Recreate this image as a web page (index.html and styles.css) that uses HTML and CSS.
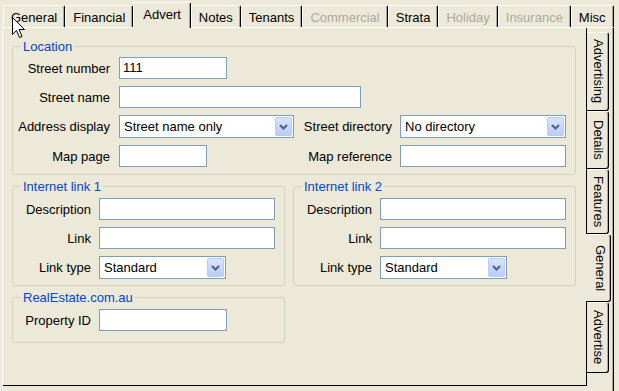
FILE: index.html
```html
<!DOCTYPE html>
<html lang="en">
<head>
  <meta charset="UTF-8">
  <title>Property - Advert</title>
  <link rel="stylesheet" href="styles.css">
</head>
<body>
  <div class="window">
    <div class="tabs">
      <div class="tab">General</div>
      <div class="tab">Financial</div>
      <div class="tab active">Advert</div>
      <div class="tab">Notes</div>
      <div class="tab">Tenants</div>
      <div class="tab disabled">Commercial</div>
      <div class="tab">Strata</div>
      <div class="tab disabled">Holiday</div>
      <div class="tab disabled">Insurance</div>
      <div class="tab">Misc</div>
    </div>

    <div class="page">
      <div class="inner">
        <fieldset class="group location">
          <legend>Location</legend>
          <div class="loc-grid">
            <label class="lbl">Street number</label>
            <div class="input w-num">111</div>
            <span></span><span></span>

            <label class="lbl">Street name</label>
            <div class="input w-name"></div>
            <span></span>

            <label class="lbl">Address display</label>
            <div class="combo w-addr">
              <span class="combo-text">Street name only</span>
              <span class="combo-btn"><svg width="9" height="6" viewBox="0 0 9 6"><path d="M1 1 L4.5 4.5 L8 1" fill="none" stroke="#4D6185" stroke-width="2"/></svg></span>
            </div>
            <label class="lbl lbl-r">Street directory</label>
            <div class="combo">
              <span class="combo-text">No directory</span>
              <span class="combo-btn"><svg width="9" height="6" viewBox="0 0 9 6"><path d="M1 1 L4.5 4.5 L8 1" fill="none" stroke="#4D6185" stroke-width="2"/></svg></span>
            </div>

            <label class="lbl">Map page</label>
            <div class="input w-map"></div>
            <label class="lbl lbl-r">Map reference</label>
            <div class="input"></div>
          </div>
        </fieldset>

        <div class="links">
          <fieldset class="group link1">
            <legend>Internet link 1</legend>
            <div class="link-grid">
              <label class="lbl">Description</label>
              <div class="input"></div>
              <label class="lbl">Link</label>
              <div class="input"></div>
              <label class="lbl">Link type</label>
              <div class="combo w-type">
                <span class="combo-text">Standard</span>
                <span class="combo-btn"><svg width="9" height="6" viewBox="0 0 9 6"><path d="M1 1 L4.5 4.5 L8 1" fill="none" stroke="#4D6185" stroke-width="2"/></svg></span>
              </div>
            </div>
          </fieldset>

          <fieldset class="group link2">
            <legend>Internet link 2</legend>
            <div class="link-grid">
              <label class="lbl">Description</label>
              <div class="input"></div>
              <label class="lbl">Link</label>
              <div class="input"></div>
              <label class="lbl">Link type</label>
              <div class="combo w-type">
                <span class="combo-text">Standard</span>
                <span class="combo-btn"><svg width="9" height="6" viewBox="0 0 9 6"><path d="M1 1 L4.5 4.5 L8 1" fill="none" stroke="#4D6185" stroke-width="2"/></svg></span>
              </div>
            </div>
          </fieldset>
        </div>

        <fieldset class="group realestate">
          <legend>RealEstate.com.au</legend>
          <div class="link-grid">
            <label class="lbl">Property ID</label>
            <div class="input w-pid"></div>
          </div>
        </fieldset>
      </div>

      <div class="side">
        <div class="vtab h-advertising">Advertising</div>
        <div class="vtab h-details">Details</div>
        <div class="vtab h-features">Features</div>
        <div class="vtab active h-general">General</div>
        <div class="vtab h-advertise">Advertise</div>
      </div>
    </div>

    <svg class="cursor" width="13" height="22" viewBox="0 0 13 22">
      <path d="M0.5 0.5 L0.5 17.5 L4.5 13.5 L7.5 20.5 L10 19.5 L7 12.5 L12.5 12.5 Z" fill="#fff" stroke="#000" stroke-width="1"/>
    </svg>
  </div>
</body>
</html>
```

FILE: styles.css
```css
body{
  margin: 0;
  background-color: #ECE9D8;
  font-family: "Liberation Sans", Arial, sans-serif;
  font-size: 13px;
  color: #000;
}
.window{
  position: relative;
  height: 391px;
  overflow: hidden;
}

/* top tab strip */
.tabs{
  display: flex;
  align-items: flex-end;
  height: 27px;
  padding-left: 3px;
}
.tab{
  box-sizing: border-box;
  height: 22px;
  padding: 2px 7px 0 7px;
  display: flex;
  align-items: center;
  border-top: 1px solid #fff;
  border-left: 1px solid #fff;
  border-right: 1px solid #000;
  border-top-right-radius: 2px;
  box-shadow: inset -1px 0 #ACA899;
  white-space: nowrap;
}
.tab.disabled{
  color: #ACA899;
}
.tab.active{
  height: 26px;
  margin-bottom: -1px;
  padding: 0 9px 2px 9px;
  background-color: #ECE9D8;
  position: relative;
  z-index: 1;
}

/* page */
.page{
  display: flex;
  box-sizing: border-box;
  margin-left: 2px;
  width: 612px;
  height: 364px;
  border-top: 1px solid #fff;
  border-left: 1px solid #fff;
  border-right: 1px solid #000;
  box-shadow: inset -1px 0 #ACA899;
}
.inner{
  box-sizing: border-box;
  width: 584px;
  height: 358px;
  border-right: 1px solid #000;
  border-bottom: 1px solid #000;
  padding: 11px 0 0 9px;
}

/* group boxes */
.group{
  margin: 0;
  padding: 0 0 7px 0;
  border: 1px solid #D0D0BF;
  border-radius: 3px;
  min-width: 0;
}
.group legend{
  margin-left: 8px;
  padding: 0 2px;
  color: #0046D5;
  line-height: 15px;
}
.location{
  width: 564px;
  box-sizing: border-box;
}
.loc-grid{
  display: grid;
  grid-template-columns: 106px 181px 100px 166px;
  row-gap: 7px;
  padding-top: 3px;
}
.links{
  display: flex;
  gap: 8px;
  margin-top: 4px;
}
.link1{
  box-sizing: border-box;
  width: 273px;
  padding-bottom: 6px;
}
.link2{
  box-sizing: border-box;
  width: 283px;
  padding-bottom: 6px;
}
.link-grid{
  display: grid;
  grid-template-columns: 86px 1fr;
  row-gap: 7px;
  padding-top: 4px;
  padding-right: 9px;
}
.realestate{
  box-sizing: border-box;
  width: 273px;
  margin-top: 4px;
  padding-bottom: 11px;
}

.lbl{
  align-self: center;
  text-align: right;
  padding-right: 9px;
  white-space: nowrap;
}
.link-grid .lbl{
  padding-right: 8px;
}
.lbl-r{
  padding-right: 8px;
}

/* inputs */
.input{
  box-sizing: border-box;
  height: 22px;
  border: 1px solid #7F9DB9;
  background-color: #fff;
  padding: 0 3px;
  line-height: 20px;
}
.w-num{ width: 108px; }
.w-name{ width: 242px; grid-column: span 2; }
.w-map{ width: 88px; }
.w-pid{ width: 128px; }

.combo{
  box-sizing: border-box;
  height: 23px;
  border: 1px solid #7F9DB9;
  background-color: #fff;
  display: flex;
  align-items: center;
  padding-left: 4px;
}
.w-addr{ width: 175px; }
.w-type{ width: 127px; }
.combo-text{
  flex: 1;
  white-space: nowrap;
}
.combo-btn{
  box-sizing: border-box;
  width: 17px;
  height: 19px;
  margin-right: 1px;
  border: 1px solid #B9CCF6;
  border-radius: 2px;
  background: linear-gradient(#D8E4FD, #BACDF7);
  display: flex;
  align-items: center;
  justify-content: center;
}

/* vertical tabs on the right */
.side{
  padding-top: 4px;
  display: flex;
  flex-direction: column;
}
.vtab{
  box-sizing: border-box;
  writing-mode: vertical-rl;
  width: 22px;
  line-height: 20px;
  text-align: center;
  border-top: 1px solid #fff;
  border-right: 1px solid #000;
  border-bottom: 1px solid #000;
  border-radius: 0 3px 3px 0;
  box-shadow: inset -1px 0 #ACA899;
}
.vtab.active{
  width: 25px;
  margin-left: -1px;
  background-color: #ECE9D8;
}
.h-advertising{ height: 79px; }
.h-details{ height: 58px; }
.h-features{ height: 65px; }
.h-general{ height: 68px; }
.h-advertise{ height: 71px; }

.cursor{
  position: absolute;
  left: 12px;
  top: 17px;
}
```
